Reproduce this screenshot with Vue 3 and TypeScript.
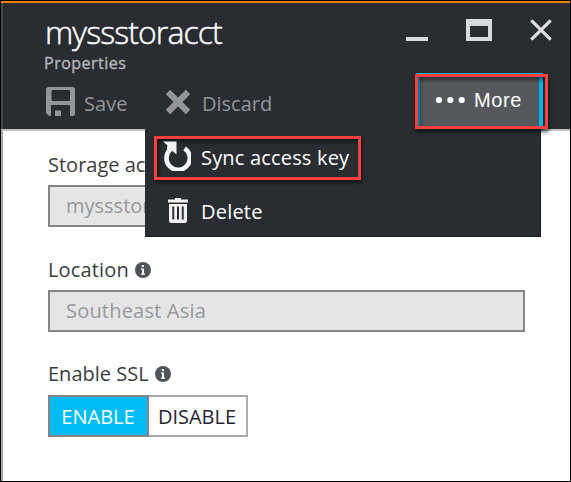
<script setup lang="ts">
import { ref } from 'vue'

const sslEnabled = ref<boolean>(true)
const account = 'myssstoracct'
const location = 'Southeast Asia'
</script>

<template>
  <div class="blade">
    <header class="header">
      <div class="title-row">
        <div class="titles">
          <h1 class="title">{{ account }}</h1>
          <div class="subtitle">Properties</div>
        </div>
        <div class="window-controls">
          <svg class="min" viewBox="0 0 22 4"><rect width="22" height="4" fill="#d9dadb" /></svg>
          <svg class="max" viewBox="0 0 26 22"><path fill="#d9dadb" fill-rule="evenodd" d="M0 0H26V22H0ZM4 7V18H22V7Z" /></svg>
          <svg class="close" viewBox="0 0 22 22"><path d="M1.3 1.3L20.7 20.7M20.7 1.3L1.3 20.7" stroke="#dedfe0" stroke-width="3.2" /></svg>
        </div>
      </div>
      <nav class="toolbar">
        <button class="tool">
          <svg class="save-icon" viewBox="0 0 29 29">
            <path fill="#939598" fill-rule="evenodd" d="M2.5 0H26.5Q29 0 29 2.5V26.5Q29 29 26.5 29H24V19Q24 18 23 18H6Q5 18 5 19V29H3L0 26V2.5Q0 0 2.5 0ZM5.5 4V12.5Q5.5 14 7 14H22.5Q24 14 24 12.5V4Q24 3 23 3H6.5Q5.5 3 5.5 4Z" />
            <rect x="9" y="23.5" width="6" height="5.5" fill="#939598" />
          </svg>
          <span class="save-text">Save</span>
        </button>
        <button class="tool discard">
          <svg class="x-icon" viewBox="0 0 26 26"><path d="M3 3L23 23M23 3L3 23" stroke="#939598" stroke-width="6.2" /></svg>
          <span class="discard-text">Discard</span>
        </button>
        <button class="more">
          <svg class="dots" viewBox="0 0 30 8"><circle cx="4" cy="4" r="3.1" /><circle cx="15.3" cy="4" r="3.1" /><circle cx="26.7" cy="4" r="3.1" /></svg>
          <span>More</span>
        </button>
      </nav>
      <div class="menu">
        <div class="item marked">
          <svg class="sync-icon" viewBox="0 0 28 30">
            <path d="M7.4 8.4A11.7 11.7 0 1 0 21.6 7.4" fill="none" stroke="#f7f7f7" stroke-width="4.6" />
            <path d="M0 0.5H13.5V13.5L9 9.8L5.4 11L3.8 7.2L4.5 4.5Z" fill="#f0f0f0" />
          </svg>
          <span class="sync-text">Sync access key</span>
        </div>
        <div class="item delete">
          <svg class="trash-icon" viewBox="0 0 20 25">
            <path fill="#f2f2f2" fill-rule="evenodd" d="M7 0H13V1.5H20V4.5H0V1.5H7ZM1 6H19V22.5Q19 25 16.5 25H3.5Q1 25 1 22.5ZM4.3 8.5V21.5H6.2V8.5ZM9 8.5V21.5H11V8.5ZM13.8 8.5V21.5H15.7V8.5Z" />
          </svg>
          <span class="delete-text">Delete</span>
        </div>
      </div>
      <div class="more-mark"></div>
    </header>

    <main class="body">
      <section class="group">
        <label class="label"><span class="account-label">Storage ac</span></label>
        <div class="field"><span class="account-text">{{ account }}</span></div>
      </section>
      <section class="group">
        <label class="label"><span class="loc-label">Location</span>
          <svg class="info" viewBox="0 0 16 16"><circle cx="8" cy="8" r="8" fill="#505459" /><path fill="#fff" d="M6.8 3H9V5H6.8ZM6 6.4H9V11.4H10V12.8H6V11.4H7V7.8H6Z" /></svg>
        </label>
        <div class="field"><span class="region-text">{{ location }}</span></div>
      </section>
      <section class="group">
        <label class="label ssl"><span class="ssl-label">Enable SSL</span>
          <svg class="info" viewBox="0 0 16 16"><circle cx="8" cy="8" r="8" fill="#505459" /><path fill="#fff" d="M6.8 3H9V5H6.8ZM6 6.4H9V11.4H10V12.8H6V11.4H7V7.8H6Z" /></svg>
        </label>
        <div class="switch">
          <button class="option" :class="{ on: sslEnabled }" @click="sslEnabled = true"><span class="enable-text">ENABLE</span></button>
          <button class="option" :class="{ on: !sslEnabled }" @click="sslEnabled = false"><span class="disable-text">DISABLE</span></button>
        </div>
      </section>
    </main>
  </div>
</template>

<style>
body { margin: 0; overflow: hidden; }
</style>

<style scoped>
* { box-sizing: border-box; }
.blade {
  width: 571px;
  height: 482px;
  border: 1px solid #000;
  background: #fff;
  font: 20px/28px "Open Sans", "Noto Sans", sans-serif;
  color: #3b3c3e;
  display: flex;
  flex-direction: column;
}
button { font: inherit; border: 0; padding: 0; margin: 0; background: none; color: inherit; }
span { white-space: nowrap; }
svg { display: block; flex: none; }
.header {
  position: relative;
  height: 130px;
  flex: none;
  background: #292d31;
  border-top: 2px solid #ee8207;
  border-bottom: 2px solid #bfc0c1;
  box-shadow: inset 2px 0 #45484b;
}
.title-row { display: flex; justify-content: space-between; height: 75px; padding: 8px 18px 0 43px; }
.title { margin: 0 0 0 1px; font-size: 32px; line-height: 42px; font-weight: 300; color: #fff; letter-spacing: -0.9px; -webkit-text-stroke: .45px #fff; }
.subtitle { font-size: 16px; line-height: 20px; font-weight: 400; color: #b2b4b6; letter-spacing: .5px; -webkit-text-stroke: .4px #b2b4b6; }
.window-controls { display: flex; align-items: flex-end; height: 30px; }
.min { width: 22px; height: 4px; }
.max { width: 26px; height: 22px; margin-left: 38px; }
.close { width: 22px; height: 22px; margin-left: 38px; }
.toolbar { display: flex; padding-left: 45px; height: 50px; color: #939598; }
.tool { display: flex; align-items: flex-start; padding-top: 9px; }
.tool span { line-height: 28px; margin-top: 3px; }
.save-icon { width: 29px; height: 29px; }
.save-text { margin-left: 9px; width: 44px; text-align: left; letter-spacing: .1px; }
.discard { margin-left: 37px; }
.x-icon { width: 26px; height: 26px; margin-top: 2px; }
.discard-text { margin-left: 11px; }
.more {
  position: absolute;
  left: 415px;
  top: 70px;
  width: 127px;
  height: 58px;
  border: 4px solid #00b4ee;
  border-top-width: 1px;
  border-bottom-width: 4px;
  background: #55585d;
  color: #fff;
  display: flex;
  align-items: center;
  padding: 0 0 2px 15px;
  gap: 9px;
  font: 20px/28px "Liberation Sans", sans-serif;
  letter-spacing: .6px;
}
.dots { width: 30px; height: 8px; fill: #fff; margin-top: 1px; }
.more-mark {
  position: absolute;
  left: 414px;
  top: 71px;
  width: 133px;
  height: 55px;
  border: 3px solid #fa4040;
  box-shadow: 1px 3px 4px rgba(0, 0, 0, .6), inset 2px 3px 4px rgba(0, 0, 0, .5);
}
.menu {
  position: absolute;
  left: 144px;
  top: 126px;
  width: 396px;
  height: 108px;
  background: #292d31;
  border: solid #1c2024;
  border-width: 0 1px 1px 0;
  color: #fff;
  padding: 7px 0 0 9px;
}
.item { display: flex; align-items: center; }
.marked {
  width: 207px;
  height: 44px;
  border: 3px solid #fa4040;
  padding-left: 6px;
  box-shadow: 1px 3px 4px rgba(0, 0, 0, .6), inset 2px 3px 4px rgba(0, 0, 0, .5);
}
.sync-icon { width: 28px; height: 30px; margin-top: -5px; }
.sync-text { margin-left: 10px; letter-spacing: .18px; }
.delete { height: 56px; padding: 5px 0 0 14px; margin-top: 1px; }
.trash-icon { width: 20px; height: 25px; margin-top: -2px; }
.delete-text { margin-left: 13px; letter-spacing: .2px; }
.body { flex: 1; padding: 20px 45px 0 45px; border-left: 2px solid #aaa; }
.group { height: 105px; }
.label { display: flex; align-items: center; height: 34px; padding-bottom: 6px; white-space: nowrap; gap: 6px; }
.ssl { padding-bottom: 8px; }
.loc-label { letter-spacing: .15px; }
.region-text { letter-spacing: .2px; }
.info { width: 16px; height: 16px; margin-top: -1px; }
.field {
  width: 477px;
  height: 42px;
  border: 2px solid #858585;
  background: #e5e5e5;
  color: #95989b;
  display: flex;
  align-items: center;
  padding-left: 16px;
}
.switch { display: flex; }
.option { width: 99px; height: 42px; border: 2px solid #aaa; color: #24252f; background: #fff; display: flex; justify-content: center; align-items: center; padding: 1px 1px 0 0; }
.option + .option { border-left: 0; }
.option.on { width: 101px; background: #00bcf5; color: #fff; border: 2px solid #858585; }
</style>
